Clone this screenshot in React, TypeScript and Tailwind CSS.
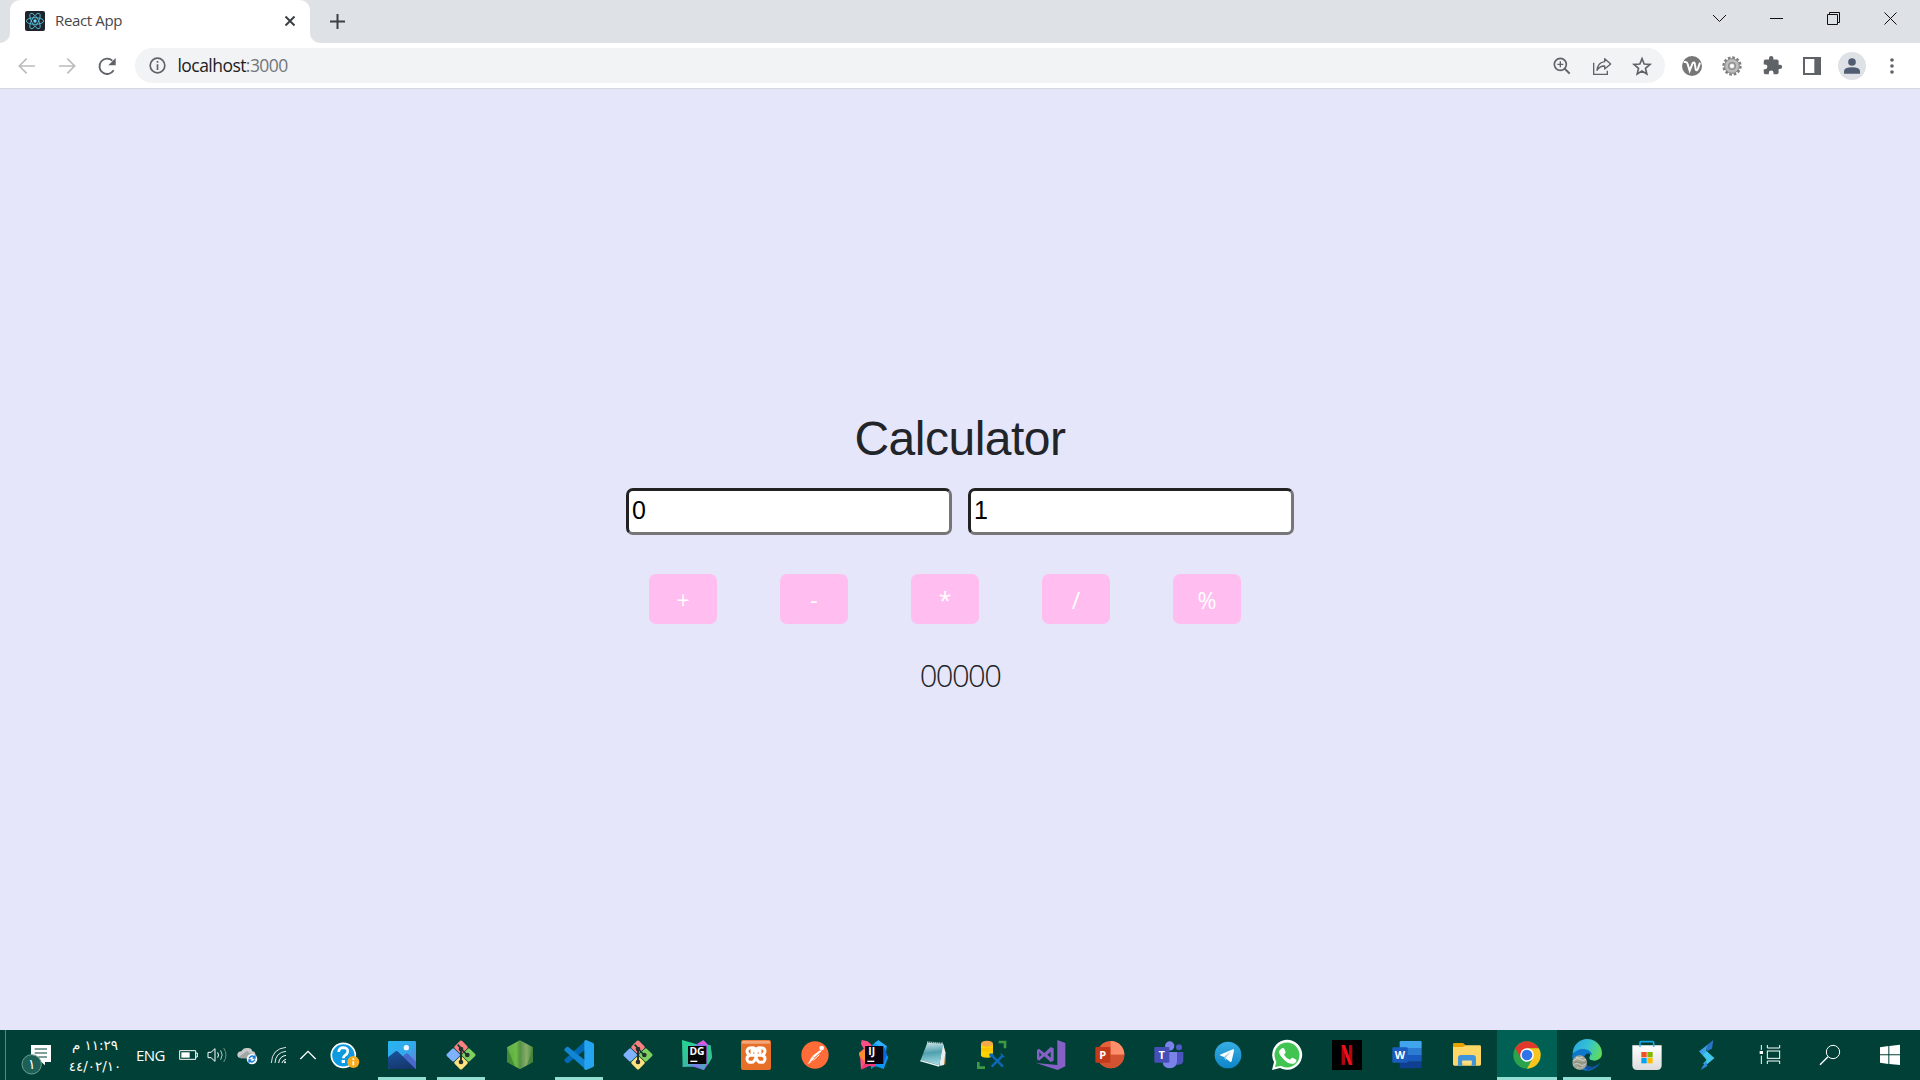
import React, { useState } from "react";

type Children = { children: React.ReactNode };

/* 30px taskbar glyph drawn on a 90-unit grid */
const Glyph = ({ children }: Children) => (
  <svg width="30" height="30" viewBox="0 0 90 90" className="overflow-visible">
    {children}
  </svg>
);

const Label = ({ x, y, size, children }: { x: number; y: number; size: number; children: string }) => (
  <text x={x} y={y} fontSize={size} fontWeight="700" fill="#fff" textAnchor="middle" fontFamily="Open Sans, sans-serif">
    {children}
  </text>
);

const Photos = () => (
  <Glyph>
    <defs>
      <linearGradient id="phSky" x1="0" y1="0" x2="1" y2="1">
        <stop offset="0" stopColor="#28b5f0" />
        <stop offset="0.55" stopColor="#35a7ec" />
        <stop offset="1" stopColor="#7c74d4" />
      </linearGradient>
      <linearGradient id="phHill" x1="0" y1="0" x2="0.3" y2="1">
        <stop offset="0" stopColor="#17559f" />
        <stop offset="1" stopColor="#17386f" />
      </linearGradient>
    </defs>
    <rect x="3" y="3" width="84" height="84" rx="4" fill="url(#phSky)" />
    <path d="M38 56 56 42q4-4 8 0l23 24v17q0 4-4 4H50z" fill="#4968cc" />
    <path d="M3 52 24 35q5-4 10 1l52 51H7q-4 0-4-4z" fill="url(#phHill)" />
    <circle cx="58" cy="23" r="8" fill="#f5f8ff" />
  </Glyph>
);

const Git = () => (
  <Glyph>
    <g transform="rotate(45 45 45)">
      <rect x="13" y="13" width="31" height="31" rx="4" fill="#fb8080" />
      <rect x="46" y="13" width="31" height="31" rx="4" fill="#80d060" />
      <rect x="13" y="46" width="31" height="31" rx="4" fill="#80b3ff" />
      <rect x="46" y="46" width="31" height="31" rx="4" fill="#ffe27e" />
    </g>
    <path d="M35 14 45 25v40M46 27 63 45" stroke="#014036" strokeWidth="5" fill="none" />
    <circle cx="45" cy="27" r="7" fill="#26302f" />
    <circle cx="45" cy="66" r="7" fill="#26302f" />
    <circle cx="64" cy="45" r="7" fill="#26302f" />
    <path d="M45 27v39" stroke="#26302f" strokeWidth="5" />
  </Glyph>
);

const Node = () => (
  <Glyph>
    <defs>
      <linearGradient id="nd" x1="0" x2="1">
        <stop offset="0" stopColor="#4da63b" />
        <stop offset="0.35" stopColor="#6cbd45" />
        <stop offset="0.5" stopColor="#568f46" />
        <stop offset="0.75" stopColor="#86ae69" />
        <stop offset="1" stopColor="#4c8a3c" />
      </linearGradient>
    </defs>
    <path d="M45 1 84 22v44L45 88 6 66V22z" fill="url(#nd)" />
    <path d="M6 22 30 78 6 66zM84 22 66 76l18-10z" fill="#3f7d37" opacity=".7" />
    <path d="M45 1 6 22l10 22z" fill="#7ab35d" opacity=".45" />
  </Glyph>
);

const VSCode = () => (
  <Glyph>
    <path d="M66 1v26L13 69q-3 2-5 0l-6-5q-3-3 0-6z" fill="#0069b5" />
    <path d="M66 89V63L13 21q-3-2-5 0l-6 5q-3 3 0 6z" fill="#1286d4" />
    <path d="M66 0 86 8q4 2 4 6v62q0 4-4 6l-20 8q-4 0-5-4V4q1-4 5-4z" fill="#25a4f2" />
  </Glyph>
);

const DataGrip = () => (
  <Glyph>
    <defs>
      <linearGradient id="dg" x1="0" y1="0" x2="0.4" y2="1">
        <stop offset="0" stopColor="#25d790" />
        <stop offset="1" stopColor="#3bb6a6" />
      </linearGradient>
      <linearGradient id="dgEdge" x1="0" y1="0" x2="1" y2="0">
        <stop offset="0" stopColor="#2bd29a" />
        <stop offset="0.6" stopColor="#7a7df0" />
        <stop offset="1" stopColor="#2fc48f" />
      </linearGradient>
    </defs>
    <path d="M0 0 45 13 62 80 2 80z" fill="url(#dg)" />
    <path d="M28 24 64 1 76 13 86 18 90 54 66 90 20 76z" fill="#8a6cf0" />
    <path d="M45 12 64 1 78 15 85 50 74 80V14z" fill="#e454e0" />
    <path d="m77 14 9 2 4 36-12 22z" fill="#2fc48f" />
    <path d="m2 78 20-8 54-4-12 24-28-14-34 4z" fill="url(#dgEdge)" />
    <rect x="18" y="18" width="55" height="54" fill="#080708" />
    <Label x={45} y={45} size={31}>DG</Label>
    <rect x="25" y="62" width="21" height="4" fill="#fff" />
  </Glyph>
);

const Xampp = () => (
  <Glyph>
    <rect width="90" height="90" rx="6" fill="#e77028" />
    <path d="M3 5q0-3 4-3h76q4 0 4 3v6H3z" fill="#f2a67a" />
    <path
      d="M33 38V34Q33 30 37 30 45 31 45 45 45 60 36 66 18 70 18 56 18 48 28 46 18 42 18 33 19 23 32 23M57 38V34Q57 30 53 30 45 31 45 45 45 60 54 66 72 70 72 56 72 48 62 46 72 42 72 33 71 23 58 23M30 46H60M32 23Q45 22 45 35 45 22 58 23"
      fill="none"
      stroke="#fff"
      strokeWidth="9"
      strokeLinecap="round"
      strokeLinejoin="round"
    />
  </Glyph>
);

const Postman = () => (
  <Glyph>
    <circle cx="45" cy="45" r="41" fill="#ff6c37" />
    <circle cx="65" cy="24" r="7" fill="#fff" />
    <path d="M60 31 37 48l5 5 24-21z" fill="#fff" />
    <path d="m36 49-9 17-5 6 8-3 13-14z" fill="#fff" opacity=".9" />
    <path d="M58 44 40 61" stroke="#fff" strokeWidth="3" />
  </Glyph>
);

const IntelliJ = () => (
  <Glyph>
    <path d="M8 0 26 4 38 15 27 60 6 88 4 60 0 38 14 26 6 12z" fill="#fc4f83" />
    <path d="M0 40 22 24 20 70 2 48z" fill="#fd8d2b" />
    <path d="m40 14 18-13 26 18-4 22 8 10-14 36-26-9-12 9z" fill="#1195ee" />
    <path d="m18 72 30 0 2 8-20-2-20 10-6 0z" fill="#f2377b" />
    <path d="m46 10 12-9 24 17-7 10z" fill="#2fb0ff" />
    <path d="M74 18 84 42 74 72z" fill="#0768d8" />
    <rect x="18" y="18" width="55" height="54" fill="#0b0410" />
    <Label x={38} y={45} size={31}>IJ</Label>
    <rect x="25" y="62" width="21" height="4" fill="#fff" />
  </Glyph>
);

const Notepad = () => (
  <Glyph>
    <defs>
      <linearGradient id="np" x1="0.3" y1="0" x2="0.4" y2="1">
        <stop offset="0" stopColor="#c6e2e6" />
        <stop offset="0.45" stopColor="#4fa0ae" />
        <stop offset="1" stopColor="#a5dbe4" />
      </linearGradient>
    </defs>
    <path d="M74 10 84 40 82 74 70 70z" fill="#b07a3a" />
    <path d="m64 78 14-3 4-38-8-30z" fill="#e8eef0" />
    <path d="M28 8 76 12 64 76 8 60z" fill="url(#np)" />
    <path d="m8 60 56 16-1 4L6 64z" fill="#e9f3f5" />
    <path d="m28 7 47 4" stroke="#dfe5e4" strokeWidth="6" strokeDasharray="3 3" />
  </Glyph>
);

const Ssms = () => (
  <Glyph>
    <path d="M12 12v34q0 7 18 7t18-7V12z" fill="#ffd200" />
    <path d="M12 24h36v10H12z" fill="#f5b800" opacity=".5" />
    <ellipse cx="30" cy="11" rx="18" ry="9" fill="#f5a94a" />
    <path d="M65 6h19v19M4 66v17h20" fill="none" stroke="#3c9a44" strokeWidth="8" />
    <path d="M44 46 78 80M78 46 44 80" stroke="#0d68b8" strokeWidth="7" />
    <path d="m38 42 10 0 0 8-8 0zM72 40l2 9 9 1" fill="#0d68b8" stroke="#0d68b8" strokeWidth="3" />
  </Glyph>
);

const VisualStudio = () => (
  <Glyph>
    <path d="M64 0 88 9v70L65 90 0 69l64 6z" fill="#8661c5" />
    <path
      d="M3 30 9 26 25 39 44 21 53 25V62L44 66 25 49 9 62 3 58zM10 37V51L17 44zM34 44 44 53V35z"
      fill="#8661c5"
      fillRule="evenodd"
    />
  </Glyph>
);

const PowerPoint = () => (
  <Glyph>
    <circle cx="47" cy="44" r="41" fill="#e8613a" />
    <path d="M47 3a41 41 0 0 1 41 41H47z" fill="#ff8f6b" />
    <path d="M8 56a41 41 0 0 0 80-12H47z" fill="#d35230" />
    <rect x="1" y="21" width="45" height="47" rx="3" fill="#c23a1c" />
    <Label x={23} y={56} size={33}>P</Label>
  </Glyph>
);

const Teams = () => (
  <Glyph>
    <circle cx="75" cy="22" r="9" fill="#5059c9" />
    <path d="M64 36h24v24q0 14-14 14H62z" fill="#4b53bc" />
    <circle cx="47" cy="18" r="14" fill="#7b83eb" />
    <path d="M26 36h43v27q0 22-22 22T26 63z" fill="#7b83eb" />
    <rect x="1" y="21" width="45" height="47" rx="3" fill="#464eb8" />
    <Label x={23} y={56} size={33}>T</Label>
  </Glyph>
);

const Telegram = () => (
  <Glyph>
    <defs>
      <linearGradient id="tg" x1="0" y1="0" x2="0" y2="1">
        <stop offset="0" stopColor="#37aee2" />
        <stop offset="1" stopColor="#0d86c9" />
      </linearGradient>
    </defs>
    <circle cx="45" cy="45" r="40" fill="url(#tg)" />
    <path d="M19 45 60 28q4-1 3 4l-7 31q-1 4-5 2L33 51z" fill="#fff" />
    <path d="m33 50 22-16-15 17-2 11z" fill="#9ccbe6" />
  </Glyph>
);

const WhatsApp = () => (
  <Glyph>
    <path d="M0 90 6 66A45 45 0 1 1 24 84z" fill="#fff" />
    <circle cx="45" cy="45" r="37.5" fill="#41c452" />
    <path d="M9 81l6-22 17 18z" fill="#41c452" />
    <path d="M28 26q6-5 9 1l4 9q0 3-5 8 6 11 18 15 5-7 8-6l11 6q1 9-9 12-12 3-27-11T21 36q0-6 7-10z" fill="#fff" />
  </Glyph>
);

const Netflix = () => (
  <Glyph>
    <rect width="90" height="90" fill="#000" />
    <path d="M29 15h10v59l-10 1zM51 15h10v60l-10-1z" fill="#b1060f" />
    <path d="M29 15h10l22 60-10-1z" fill="#f0101a" />
  </Glyph>
);

const Word = () => (
  <Glyph>
    <path d="M23 24V7q0-4 4-4h58q4 0 4 4v17z" fill="#41a5ee" />
    <path d="M23 24h66v21H23z" fill="#2b7cd3" />
    <path d="M23 45h66v20H23z" fill="#185abd" />
    <path d="M23 65h66v16q0 4-4 4H27q-4 0-4-4z" fill="#103f91" />
    <rect x="1" y="22" width="46" height="46" rx="3" fill="#1b5cbf" />
    <Label x={24} y={56} size={32}>W</Label>
  </Glyph>
);

const Explorer = () => (
  <Glyph>
    <path d="M3 13q0-4 4-4h26l8 7v12H3z" fill="#e8a200" />
    <path d="M3 21h30l8-5h42q4 0 4 4v53q0 4-4 4H7q-4 0-4-4z" fill="#ffd766" />
    <path d="M18 77V54q0-9 9-9h35q10 0 10 9v23H59V62H31v15z" fill="#3f94db" />
    <path d="M31 62h28v8H31z" fill="#ffe08a" />
  </Glyph>
);

const Chrome = () => (
  <Glyph>
    <circle cx="45" cy="45" r="41" fill="#2ba24c" />
    <path d="M45 24.5h35.5A41 41 0 0 0 9.5 24.5L27 55z" fill="#e0392b" />
    <path d="M62 55 45 86a41 41 0 0 0 35.5-61.5H45z" fill="#fcc31e" />
    <circle cx="45" cy="45" r="20.5" fill="#fff" />
    <circle cx="45" cy="45" r="16" fill="#2f74e8" />
  </Glyph>
);

const Edge = () => (
  <Glyph>
    <defs>
      <linearGradient id="edTop" x1="0" y1="0.2" x2="1" y2="0.5">
        <stop offset="0" stopColor="#2aa5e0" />
        <stop offset="0.5" stopColor="#34c1d4" />
        <stop offset="1" stopColor="#5fdc5c" />
      </linearGradient>
    </defs>
    <path d="M2 42A44 44 0 0 1 90 40Q90 60 68 62 50 62 52 52 60 40 46 34 20 26 2 42z" fill="url(#edTop)" />
    <path d="M1 44Q14 26 36 27 58 29 60 46 50 36 40 44 28 60 44 76q16 14 40-8A44 44 0 0 1 1 44z" fill="#0d78cc" />
    <path d="M36 50q-4 28 24 30 16-2 24-12A44 44 0 0 1 46 90Q28 76 30 60z" fill="#154f9e" />
    <circle cx="23" cy="68" r="22" fill="#a2a595" />
    <path d="M4 62q12-10 20-4t18 0M12 52q10 4 20 0" stroke="#d3d5c8" strokeWidth="3" fill="none" />
    <path d="M4 74q14-8 20 0t16-2M14 84q8-6 18-2" stroke="#c6c9bb" strokeWidth="3" fill="none" />
    <path d="M6 68q12-4 18 0t18-2M18 78l12 2" stroke="#858a7b" strokeWidth="3" fill="none" />
  </Glyph>
);

const Store = () => (
  <Glyph>
    <defs>
      <linearGradient id="st" x1="0" y1="0" x2="0" y2="1">
        <stop offset="0" stopColor="#fff" />
        <stop offset="1" stopColor="#dcdcdc" />
      </linearGradient>
    </defs>
    <path d="M24 22V8q0-3 3-3h35q3 0 3 3v14" fill="none" stroke="#1ba5e0" strokeWidth="5" />
    <path d="M1 16h88v60q0 14-14 14H15Q1 90 1 76z" fill="url(#st)" />
    <path d="M24 20v-4M65 20v-4" stroke="#1ba5e0" strokeWidth="5" />
    <rect x="28" y="36" width="16" height="16" fill="#f25022" />
    <rect x="46" y="36" width="16" height="16" fill="#7fba00" />
    <rect x="28" y="54" width="16" height="16" fill="#00a4ef" />
    <rect x="46" y="54" width="16" height="16" fill="#ffb900" />
  </Glyph>
);

const Bolt = () => (
  <Glyph>
    <defs>
      <linearGradient id="sg" x1="0" y1="0" x2="1" y2="1">
        <stop offset="0" stopColor="#2e86e8" />
        <stop offset="1" stopColor="#55e0e8" />
      </linearGradient>
    </defs>
    <path d="M64 0 60 26 44 34V16z" fill="#2a72c4" />
    <path d="M46 15 21 34 44 60 32 72 66 54 42 34z" fill="url(#sg)" />
    <path d="m44 33 23 22-21 17-12 0 12-14-12-12z" fill="#3fc7ee" />
    <path d="m42 62-16 28 20-12z" fill="#2f8ad8" />
  </Glyph>
);

const TaskView = () => (
  <Glyph>
    <g fill="none" stroke="#fff" strokeWidth="3">
      <path d="M19 15v15M19 47v25M37 15v9h37v-9M37 72v-9h37v9" />
      <rect x="37" y="33" width="37" height="22" />
    </g>
    <rect x="14" y="33" width="10" height="9" fill="#fff" />
  </Glyph>
);

const Search = () => (
  <Glyph>
    <circle cx="54" cy="36" r="20" fill="none" stroke="#fff" strokeWidth="3" />
    <path d="M39 50 15 74" stroke="#fff" strokeWidth="4" />
  </Glyph>
);

const Windows = () => (
  <Glyph>
    <path d="M15 22 40 18V43H15zM43 18 75 14V43H43zM15 46H40V72L15 68zM43 46H75V75L43 72z" fill="#fff" />
  </Glyph>
);

type App = { icon: () => React.JSX.Element; open?: boolean; active?: boolean };
const apps: App[] = [
  { icon: Photos, open: true },
  { icon: Git, open: true },
  { icon: Node },
  { icon: VSCode, open: true },
  { icon: Git },
  { icon: DataGrip },
  { icon: Xampp },
  { icon: Postman },
  { icon: IntelliJ },
  { icon: Notepad },
  { icon: Ssms },
  { icon: VisualStudio },
  { icon: PowerPoint },
  { icon: Teams },
  { icon: Telegram },
  { icon: WhatsApp },
  { icon: Netflix },
  { icon: Word },
  { icon: Explorer },
  { icon: Chrome, active: true },
  { icon: Edge, open: true },
  { icon: Store },
  { icon: Bolt },
];

const TabStrip = () => (
  <div className="flex h-[43px] bg-[#dee1e6]">
    <div className="flex w-[10px] items-end">
      <svg width="10" height="10">
        <path d="M0 10H10V0A10 10 0 0 1 0 10z" fill="#fff" />
      </svg>
    </div>
    <div className="flex w-[300px] items-center rounded-t-[10px] bg-white pr-[13px] pb-px pl-[15px]">
      <svg width="20" height="20" viewBox="0 0 60 60">
        <rect width="60" height="60" rx="6" fill="#20232a" />
        <g fill="none" stroke="#53c1de" strokeWidth="2.6">
          <ellipse cx="30" cy="30" rx="26" ry="10" />
          <ellipse cx="30" cy="30" rx="26" ry="10" transform="rotate(60 30 30)" />
          <ellipse cx="30" cy="30" rx="26" ry="10" transform="rotate(120 30 30)" />
        </g>
        <circle cx="30" cy="30" r="5" fill="#61dafb" />
      </svg>
      <span className="ml-[10px] flex-1 pb-px text-[15px] tracking-[-0.35px] text-[#45474a]">React App</span>
      <svg width="12" height="12" viewBox="0 0 12 12" className="mr-[1px]">
        <path d="M1.5 1.5 10.5 10.5M10.5 1.5 1.5 10.5" stroke="#3c4043" strokeWidth="2" />
      </svg>
    </div>
    <div className="flex w-[10px] items-end">
      <svg width="10" height="10">
        <path d="M0 0V10H10A10 10 0 0 1 0 0z" fill="#fff" />
      </svg>
    </div>
    <div className="flex items-center pl-[10px]">
      <svg width="15" height="15" viewBox="0 0 15 15">
        <path d="M7.5 0v15M0 7.5h15" stroke="#3c4043" strokeWidth="2" />
      </svg>
    </div>
    <div className="mr-px ml-auto flex h-[37px] items-center">
      {[
        "M12 15 18.5 21.5 25 15",
        "M12 18.5H25",
        "M12.5 14.5H22.5V24.5H12.5zM14.5 14.5V12.5H24.5V22.5H22.5",
        "M12.5 12.5 24.5 24.5M24.5 12.5 12.5 24.5",
      ].map((d) => (
        <div key={d} className="flex w-[57px] justify-center">
          <svg width="37" height="37" viewBox="0 0 37 37">
            <path d={d} fill="none" stroke="#111" strokeWidth="1" />
          </svg>
        </div>
      ))}
    </div>
  </div>
);

const Slot = ({ children }: Children) => (
  <div className="flex h-full w-10 shrink-0 items-center justify-center">{children}</div>
);

/* 20px toolbar glyph on a 60-unit grid */
const Tool = ({ children }: Children) => (
  <svg width="20" height="20" viewBox="0 0 60 60" className="overflow-visible">
    {children}
  </svg>
);

const Toolbar = () => (
  <div className="flex h-[46px] items-center border-b border-[#d5d7dc] bg-white pr-2 pl-[7px]">
    <Slot>
      <Tool>
        <path d="M54 30H8M29 8 7 30 29 52" fill="none" stroke="#babcbe" strokeWidth="5" />
      </Tool>
    </Slot>
    <Slot>
      <Tool>
        <path d="M6 30H52M31 8 53 30 31 52" fill="none" stroke="#babcbe" strokeWidth="5" />
      </Tool>
    </Slot>
    <Slot>
      <Tool>
        <path d="M50 43A23 23 0 1 1 46 14" fill="none" stroke="#5f6368" strokeWidth="5.5" />
        <path d="M56 6V28H34z" fill="#5f6368" />
      </Tool>
    </Slot>
    <div className="ml-2 flex h-[35px] flex-1 items-center rounded-full bg-[#f1f3f4] pr-[3px] pl-[14px]">
      <svg width="17" height="17" viewBox="0 0 51 51">
        <circle cx="25.5" cy="25.5" r="22" fill="none" stroke="#5f6368" strokeWidth="5" />
        <path d="M25.5 22v17M25.5 12v5.5" stroke="#5f6368" strokeWidth="5" />
      </svg>
      <span className="ml-[11.5px] flex-1 text-[17.5px] tracking-[-0.55px] text-[#202124]">
        localhost<span className="text-[#72767b]">:3000</span>
      </span>
      <Slot>
        <Tool>
          <circle cx="25" cy="25" r="18" fill="none" stroke="#5f6368" strokeWidth="5" />
          <path d="M38 38 53 53" stroke="#5f6368" strokeWidth="6" />
          <path d="M25 16v18M16 25h18" stroke="#5f6368" strokeWidth="4" />
        </Tool>
      </Slot>
      <Slot>
        <Tool>
          <path d="M5 20V55H46V44" fill="none" stroke="#5f6368" strokeWidth="4" />
          <path
            d="M38 8 56 24 38 39V30Q24 29 15 43 17 20 38 17z"
            fill="none"
            stroke="#5f6368"
            strokeWidth="4"
            strokeLinejoin="round"
          />
        </Tool>
      </Slot>
      <Slot>
        <Tool>
          <path
            d="M30 8 36.5 24 54 25.5 40.5 37 44.5 54 30 45 15.500 54 19.500 37 6 25.500 23.500 24z"
            fill="none"
            stroke="#5f6368"
            strokeWidth="5"
          />
        </Tool>
      </Slot>
    </div>
    <div className="ml-[7px] flex h-full">
      <Slot>
        <Tool>
          <circle cx="30" cy="30" r="30" fill="#777" />
          <path
            d="M5 18h6Q15 18 17 24L23 44 32 21Q38 16 39 26L41 40Q44 47 48 38L54 20"
            fill="none"
            stroke="#fff"
            strokeWidth="6"
          />
        </Tool>
      </Slot>
      <Slot>
        <Tool>
          <circle cx="30" cy="30" r="25.5" fill="none" stroke="#7d7d7d" strokeWidth="7" strokeDasharray="8 5.35" />
          <circle cx="30" cy="30" r="22" fill="#bdbdbd" stroke="#858585" strokeWidth="3" />
          <circle cx="30" cy="30" r="10" fill="none" stroke="#8d8d8d" strokeWidth="4" />
          <circle cx="30" cy="30" r="6" fill="#fff" />
        </Tool>
      </Slot>
      <Slot>
        <svg width="21" height="21" viewBox="0 0 24 24" fill="#5f6368">
          <path d="M20.5 11H19V7a2 2 0 0 0-2-2h-4V3.500a2.500 2.500 0 0 0-5 0V5H4a2 2 0 0 0-2 2v3.800h1.500a2.700 2.700 0 0 1 0 5.400H2V20a2 2 0 0 0 2 2h3.800v-1.500a2.700 2.700 0 0 1 5.400 0V22H17a2 2 0 0 0 2-2v-4h1.500a2.500 2.500 0 0 0 0-5z" />
        </svg>
      </Slot>
      <Slot>
        <Tool>
          <rect x="6" y="6" width="48" height="48" fill="none" stroke="#5f6368" strokeWidth="6" />
          <rect x="37" y="5" width="19" height="50" fill="#5f6368" />
        </Tool>
      </Slot>
      <Slot>
        <div className="flex size-7 items-center justify-center rounded-full bg-[#dee1e6]">
          <svg width="16" height="16" viewBox="0 0 48 48" fill="#505d73">
            <circle cx="24" cy="12" r="11.5" />
            <path d="M0 47V40Q0 28 24 28T48 40V47z" />
          </svg>
        </div>
      </Slot>
      <Slot>
        <Tool>
          <g fill="#5f6368">
            <circle cx="30" cy="12" r="5.5" />
            <circle cx="30" cy="30" r="5.5" />
            <circle cx="30" cy="48" r="5.5" />
          </g>
        </Tool>
      </Slot>
    </div>
  </div>
);

const Calculator = () => {
  const [a, setA] = useState("0");
  const [b, setB] = useState("1");
  const field =
    "h-[47px] w-[326px] rounded-[7px] border-[3px] border-t-[#222] border-r-[#767676] border-b-[#767676] border-l-[#222] bg-white px-[3px] pb-[2px] font-['Liberation_Sans',Arial,sans-serif] text-[25px] text-black outline-none";
  return (
    <main className="flex flex-1 flex-col items-center bg-[#e6e6fa]">
      <h1 className="mt-[321px] h-[78px] font-['Liberation_Sans',Arial,sans-serif] text-[48px] leading-[58px] tracking-[-0.5px] text-[#212529]">
        Calculator
      </h1>
      <div className="flex gap-4">
        <input className={field} value={a} onChange={(e) => setA(e.target.value)} />
        <input className={field} value={b} onChange={(e) => setB(e.target.value)} />
      </div>
      <div className="mt-[39px] flex w-[668px] gap-[63px] pl-[23px]">
        {["+", "-", "*", "/", "%"].map((op) => (
          <button key={op} className="h-[50px] w-[68px] rounded-[7px] bg-[#ffbdf0] pt-[3px] text-[23px] text-white">
            {op}
          </button>
        ))}
      </div>
      <p className="mt-[29px] text-[31px] leading-[45px] font-light tracking-[-1.6px] text-[#212529]">00000</p>
    </main>
  );
};

const Tray = () => (
  <div className="flex w-[372.5px] shrink-0 items-center text-white">
    <div className="ml-[5px] h-full w-px bg-[#5d857e]" />
    <svg width="34" height="40" viewBox="0 -9 102 120" className="ml-[14px] overflow-visible">
      <path d="M33 21H93V72H75V82L64 72H33z" fill="#fff" />
      <path d="M44 33H81M44 45H81M55 57H81" stroke="#014036" strokeWidth="3" />
      <circle cx="35" cy="79" r="29" fill="#1d6055" stroke="#6c9c94" strokeWidth="3" />
      <text x="35" y="93" fontSize="42" fill="#fff" textAnchor="middle" fontFamily="DejaVu Sans, sans-serif">
        ١
      </text>
    </svg>
    <div className="ml-[11px] flex w-[60px] flex-col items-center font-['DejaVu_Sans',sans-serif] text-[13.5px] leading-[20px] tracking-[-0.3px]">
      <span dir="rtl">١١:٢٩ م</span>
      <span dir="ltr" className="pt-px">
        ٤٤/٠٢/١٠
      </span>
    </div>
    <span className="ml-[11px] w-[43px] text-[15px] tracking-[-0.6px]">ENG</span>
    <svg width="19" height="12" viewBox="0 0 57 36">
      <path d="M2 5H50V31H2zM50 12h5v12h-5" fill="none" stroke="#fff" strokeWidth="3" />
      <rect x="7" y="10" width="25" height="16" fill="#fff" />
    </svg>
    <svg width="22" height="20" viewBox="0 0 66 60" className="ml-[9px]">
      <path d="M3 22H12L24 11V49L12 38H3z" fill="none" stroke="#fff" strokeWidth="3" />
      <path d="M32 22Q37 30 32 38" fill="none" stroke="#fff" strokeWidth="3" />
      <path d="M41 16Q50 30 41 44" fill="none" stroke="#b5cbc7" strokeWidth="3" />
      <path d="M50 9Q64 30 50 51" fill="none" stroke="#6d938d" strokeWidth="3" />
    </svg>
    <svg width="21" height="20" viewBox="0 0 63 60" className="ml-[8px] overflow-visible">
      <path d="M12 40Q0 38 1 28 3 19 13 19 19 8 31 9 44 8 46 19 56 20 55 30V40z" fill="#c9cbcb" />
      <path d="M6 35 30 18 52 34V40H12z" fill="#8e9796" opacity=".7" />
      <circle cx="45" cy="42" r="16" fill="#f4f8fb" />
      <path d="M36 40Q45 27 54 38M54 44Q45 57 36 46M54 31V39H47M36 53V45H43" fill="none" stroke="#1577d2" strokeWidth="4" />
    </svg>
    <svg width="18" height="18" viewBox="0 0 54 54" className="ml-[11.5px]">
      <g fill="none" stroke="#fff" strokeWidth="3">
        <path d="M4 51Q6 8 48 4" opacity=".85" />
        <path d="M15 51Q17 19 48 16" opacity=".9" />
        <path d="M26 51Q28 31 48 28" />
        <path d="M36 51Q38 42 48 40" />
      </g>
      <circle cx="45" cy="49" r="3" fill="#fff" />
    </svg>
    <svg width="18" height="12" viewBox="0 0 54 36" className="ml-[11.5px]">
      <path d="M4 30 27 7 50 30" fill="none" stroke="#fff" strokeWidth="4" />
    </svg>
    <svg width="30" height="28" viewBox="0 0 90 84" className="ml-[13px] overflow-visible">
      <circle cx="40" cy="43" r="36" fill="#0e9ae0" stroke="#fff" strokeWidth="5" />
      <path d="M26 33Q27 20 40 20 55 21 53 33 52 39 45 43 40 46 40 52" fill="none" stroke="#fff" strokeWidth="8" />
      <rect x="35" y="57" width="10" height="9" fill="#fff" />
      <circle cx="70" cy="63" r="18" fill="#f5ab20" />
      <path d="M70 61V73M70 52V57" stroke="#fff" strokeWidth="5" />
    </svg>
  </div>
);

const Taskbar = () => (
  <footer className="flex h-[50px] bg-[#014036]">
    <Tray />
    {apps.map(({ icon: Icon, open, active }, i) => (
      <div
        key={i}
        className={`flex shrink-0 flex-col items-center justify-between pt-[10px] ${i < 16 ? "w-[59px]" : "w-[60px]"} ${
          active ? "bg-[#016054]" : ""
        }`}
      >
        <Icon />
        {active && <div className="h-[3px] w-full bg-[#93dfd3]" />}
        {open && <div className="h-[3px] w-12 bg-[#93dfd3]" />}
      </div>
    ))}
    <div className="ml-auto flex items-center">
      {[TaskView, Search, Windows].map((Icon, i) => (
        <div key={i} className="flex w-[60px] justify-center">
          <Icon />
        </div>
      ))}
    </div>
  </footer>
);

export default function App() {
  return (
    <div className="flex h-[1080px] w-[1920px] flex-col overflow-hidden font-['Open_Sans','Noto_Sans',sans-serif]">
      <TabStrip />
      <Toolbar />
      <Calculator />
      <Taskbar />
    </div>
  );
}
